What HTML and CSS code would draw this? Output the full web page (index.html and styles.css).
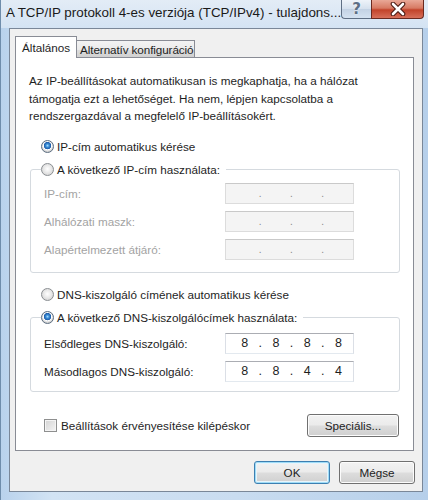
FILE: index.html
```html
<!DOCTYPE html>
<html lang="hu">
<head>
  <meta charset="UTF-8">
  <meta name="viewport" content="width=device-width, initial-scale=1.0">
  <title>A TCP/IP protokoll 4-es verziója (TCP/IPv4) - tulajdonságok</title>
  <link rel="stylesheet" href="styles.css">
</head>
<body>
  <div class="window">
    <div class="titlebar">
      <span class="title">A TCP/IP protokoll 4-es verziója (TCP/IPv4) - tulajdons...</span>
      <div class="caption">
        <span class="cap-btn help">?</span>
        <span class="cap-btn close">
          <svg width="16" height="14" viewBox="0 0 16 14">
            <path d="M3 2 L13 12 M13 2 L3 12" stroke="#4a1a12" stroke-width="4.6" stroke-linecap="round"/>
            <path d="M3 2 L13 12 M13 2 L3 12" stroke="#ffffff" stroke-width="2.6" stroke-linecap="round"/>
          </svg>
        </span>
      </div>
    </div>

    <div class="client">
      <div class="tabs">
        <div class="tab active">Általános</div>
        <div class="tab">Alternatív konfiguráció</div>
      </div>

      <div class="panel">
        <p class="intro">Az IP-beállításokat automatikusan is megkaphatja, ha a hálózat<br>támogatja ezt a lehetőséget. Ha nem, lépjen kapcsolatba a<br>rendszergazdával a megfelelő IP-beállításokért.</p>

        <label class="option standalone"><span class="radio on"></span>IP-cím automatikus kérése</label>

        <fieldset class="group">
          <legend class="option"><span class="radio"></span>A következő IP-cím használata:</legend>
          <div class="rows disabled">
            <span>IP-cím:</span>
            <div class="ip"><span></span><i>.</i><span></span><i>.</i><span></span><i>.</i><span></span></div>
            <span>Alhálózati maszk:</span>
            <div class="ip"><span></span><i>.</i><span></span><i>.</i><span></span><i>.</i><span></span></div>
            <span>Alapértelmezett átjáró:</span>
            <div class="ip"><span></span><i>.</i><span></span><i>.</i><span></span><i>.</i><span></span></div>
          </div>
        </fieldset>

        <label class="option standalone dns-auto"><span class="radio"></span>DNS-kiszolgáló címének automatikus kérése</label>

        <fieldset class="group dns">
          <legend class="option"><span class="radio on"></span>A következő DNS-kiszolgálócímek használata:</legend>
          <div class="rows">
            <span>Elsődleges DNS-kiszolgáló:</span>
            <div class="ip"><span>8</span><i>.</i><span>8</span><i>.</i><span>8</span><i>.</i><span>8</span></div>
            <span>Másodlagos DNS-kiszolgáló:</span>
            <div class="ip"><span>8</span><i>.</i><span>8</span><i>.</i><span>4</span><i>.</i><span>4</span></div>
          </div>
        </fieldset>

        <div class="bottom-row">
          <label class="option"><span class="check"></span>Beállítások érvényesítése kilépéskor</label>
          <button class="btn wide">Speciális...</button>
        </div>
      </div>

      <div class="footer">
        <button class="btn default">OK</button>
        <button class="btn">Mégse</button>
      </div>
    </div>
  </div>
</body>
</html>
```

FILE: styles.css
```css
body { margin: 0; font-family: "Liberation Sans", Arial, sans-serif; font-size: 11.7px; color: #1e1e1e; }
.window { width: 428px; height: 500px; box-sizing: border-box; display: flex; flex-direction: column; background: linear-gradient(90deg, #b9d2ec 0%, #d2e3f4 12%, #c9dcf0 55%, #b6cfea 100%); border-left: 1px solid #6f8dab; }

/* title bar */
.titlebar { height: 28px; display: flex; justify-content: space-between; align-items: flex-start; padding: 0 5px 0 5px; background: linear-gradient(180deg, #e3ecf6 0%, #d4e3f3 100%); }
.title { font-family: "Liberation Sans", Arial, sans-serif; font-size: 13.4px; color: #1a1a1a; padding-top: 5px; white-space: nowrap; }
.caption { display: flex; }
.cap-btn { height: 19px; box-sizing: border-box; display: flex; align-items: center; justify-content: center; border: 1px solid #5f6f84; border-top: none; }
.help { width: 30px; border-radius: 0 0 0 4px; background: linear-gradient(180deg, #eef3f9 0%, #d6e1ee 48%, #c3d2e4 52%, #d4e2f1 100%); color: #5d6f86; font: bold 15px "DejaVu Sans", sans-serif; text-shadow: 0 0 2px #fff; border-right: none; }
.close { width: 53px; border-radius: 0 0 4px 0; background: linear-gradient(180deg, #e9a897 0%, #d77a63 45%, #c2432a 55%, #d7705a 100%); border-color: #6b2a20; }

/* client area */
.client { flex: 1; margin: 0 5px 8px 8px; border: 1px solid #7a8798; background: #f0f0f0; padding: 7px 8px 0 5px; display: flex; flex-direction: column; }
.tabs { display: flex; align-items: flex-end; height: 22px; margin-bottom: -1px; }
.tab { height: 18px; box-sizing: border-box; border: 1px solid #898c95; border-left: none; border-bottom: none; padding: 0 1px 0 3px; display: flex; align-items: center; background: linear-gradient(180deg, #f3f3f3 0%, #ebebeb 50%, #dddddd 51%, #cfcfcf 100%); color: #1e1e1e; letter-spacing: -0.1px; }
.tab.active { height: 22px; border-left: 1px solid #898c95; background: #fff; padding: 0 6px 0 6px; position: relative; z-index: 1; letter-spacing: 0; }

.panel { height: 394px; box-sizing: border-box; border: 1px solid #898c95; background: #fff; display: flex; flex-direction: column; }
.intro { margin: 14px 0 0 13px; line-height: 17.5px; }

.option { display: flex; align-items: center; gap: 3px; line-height: 17px; height: 17px; white-space: nowrap; }
.standalone { margin: 13px 0 0 25px; }
.dns-auto { margin-top: 13px; }

.radio { width: 13px; height: 13px; box-sizing: border-box; border-radius: 50%; border: 1px solid #8a8e92; background: radial-gradient(circle at 50% 45%, #ffffff 0%, #e9e9e9 45%, #c9c9c9 100%); flex: none; }
.radio.on { background: radial-gradient(circle at 50% 42%, #a9e0ff 0%, #3c8fd8 1.6px, #1d5ca9 3.4px, #ffffff 4px, #e6e6e6 5px, #cfcfcf 6px); border-color: #5b6d80; }
.check { width: 13px; height: 13px; box-sizing: border-box; border: 1px solid #8e8f8f; background: linear-gradient(135deg, #d3d3d3 0%, #f4f4f4 100%); box-shadow: inset 0 0 0 1px #f4f4f4; flex: none; }

.group { margin: 6px 13px 0 14px; border: 1px solid #d5dadf; border-radius: 3px; padding: 5px 12px 12px 13px; }
.group legend { margin-left: -3px; padding: 0 6px 0 0; }
.group.dns { padding: 7px 12px 9px 13px; }

.rows { display: grid; grid-template-columns: 181px 129px; row-gap: 7px; align-items: center; }
.rows.disabled { color: #a3a3a3; }

.ip { height: 21px; box-sizing: border-box; display: flex; align-items: center; border: 1px solid #dbdfe6; border-top-color: #abadb3; border-bottom-color: #e3e9ef; background: #fff; padding: 0 6px 0 10px; font-size: 12.5px; }
.ip span { flex: 1; text-align: center; }
.ip i { font-style: normal; width: 14px; text-align: center; }
.disabled .ip { background: #f4f4f4; border-color: #dcdcdc; border-top-color: #c9c9c9; color: #888; font-size: 10px; }

.bottom-row { display: flex; justify-content: space-between; align-items: center; margin: 22px 14px 0 28px; }
.bottom-row .option { gap: 4px; }

.btn { height: 23px; width: 76px; font-family: inherit; font-size: 11.7px; color: #1e1e1e; border: 1px solid #707070; border-radius: 3px; background: linear-gradient(180deg, #f2f2f2 0%, #ebebeb 48%, #dddddd 52%, #cfcfcf 100%); box-shadow: inset 0 0 0 1px #fcfcfc; padding: 0; }
.btn.wide { width: 92px; }
.btn.default { border-color: #3c7fb1; box-shadow: inset 0 0 0 1px #9fdcf7, inset 0 0 0 2px #e8f4fb; }

.footer { display: flex; justify-content: flex-end; gap: 9px; margin: 10px -1px 0 0; }
```
